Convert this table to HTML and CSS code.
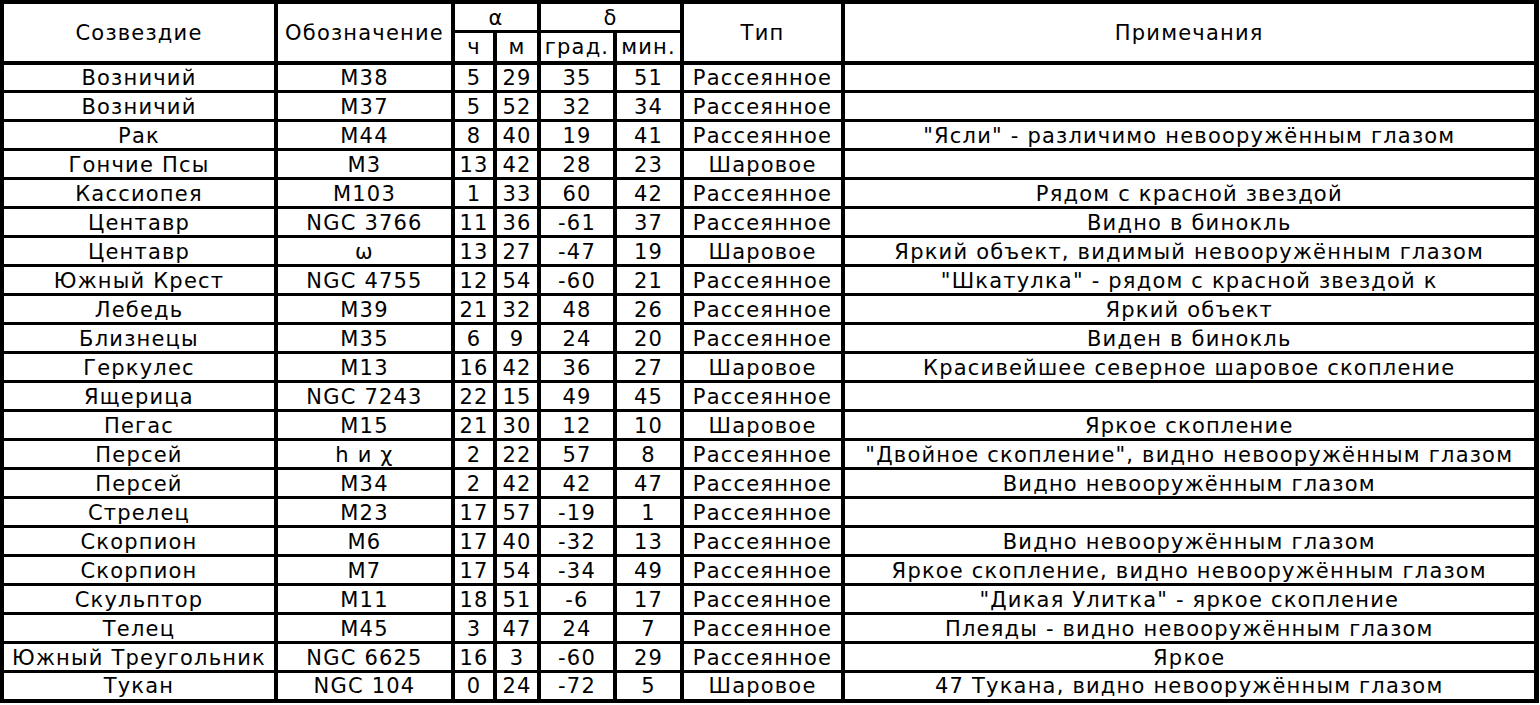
FILE: index.html
```html
<!DOCTYPE html>
<html lang="ru">
<head>
<meta charset="utf-8">
<title>Скопления</title>
<link rel="stylesheet" href="styles.css">
</head>
<body>
<table class="tbl">
  <colgroup>
    <col class="c-const">
    <col class="c-desig">
    <col class="c-h">
    <col class="c-m">
    <col class="c-deg">
    <col class="c-min">
    <col class="c-type">
    <col class="c-note">
  </colgroup>
  <thead>
    <tr class="hrow-a">
      <th rowspan="2">Созвездие</th>
      <th rowspan="2">Обозначение</th>
      <th colspan="2">α</th>
      <th colspan="2">δ</th>
      <th rowspan="2">Тип</th>
      <th rowspan="2">Примечания</th>
    </tr>
    <tr class="hrow-b">
      <th>ч</th>
      <th>м</th>
      <th>град.</th>
      <th>мин.</th>
    </tr>
  </thead>
  <tbody>
    <tr><td>Возничий</td><td>M38</td><td>5</td><td>29</td><td>35</td><td>51</td><td>Рассеянное</td><td></td></tr>
    <tr><td>Возничий</td><td>M37</td><td>5</td><td>52</td><td>32</td><td>34</td><td>Рассеянное</td><td></td></tr>
    <tr><td>Рак</td><td>M44</td><td>8</td><td>40</td><td>19</td><td>41</td><td>Рассеянное</td><td>"Ясли" - различимо невооружённым глазом</td></tr>
    <tr><td>Гончие Псы</td><td>M3</td><td>13</td><td>42</td><td>28</td><td>23</td><td>Шаровое</td><td></td></tr>
    <tr><td>Кассиопея</td><td>M103</td><td>1</td><td>33</td><td>60</td><td>42</td><td>Рассеянное</td><td>Рядом с красной звездой</td></tr>
    <tr><td>Центавр</td><td>NGC 3766</td><td>11</td><td>36</td><td>-61</td><td>37</td><td>Рассеянное</td><td>Видно в бинокль</td></tr>
    <tr><td>Центавр</td><td>ω</td><td>13</td><td>27</td><td>-47</td><td>19</td><td>Шаровое</td><td>Яркий объект, видимый невооружённым глазом</td></tr>
    <tr><td>Южный Крест</td><td>NGC 4755</td><td>12</td><td>54</td><td>-60</td><td>21</td><td>Рассеянное</td><td>"Шкатулка" - рядом с красной звездой к</td></tr>
    <tr><td>Лебедь</td><td>M39</td><td>21</td><td>32</td><td>48</td><td>26</td><td>Рассеянное</td><td>Яркий объект</td></tr>
    <tr><td>Близнецы</td><td>M35</td><td>6</td><td>9</td><td>24</td><td>20</td><td>Рассеянное</td><td>Виден в бинокль</td></tr>
    <tr><td>Геркулес</td><td>M13</td><td>16</td><td>42</td><td>36</td><td>27</td><td>Шаровое</td><td>Красивейшее северное шаровое скопление</td></tr>
    <tr><td>Ящерица</td><td>NGC 7243</td><td>22</td><td>15</td><td>49</td><td>45</td><td>Рассеянное</td><td></td></tr>
    <tr><td>Пегас</td><td>M15</td><td>21</td><td>30</td><td>12</td><td>10</td><td>Шаровое</td><td>Яркое скопление</td></tr>
    <tr><td>Персей</td><td>h и χ</td><td>2</td><td>22</td><td>57</td><td>8</td><td>Рассеянное</td><td>"Двойное скопление", видно невооружённым глазом</td></tr>
    <tr><td>Персей</td><td>M34</td><td>2</td><td>42</td><td>42</td><td>47</td><td>Рассеянное</td><td>Видно невооружённым глазом</td></tr>
    <tr><td>Стрелец</td><td>M23</td><td>17</td><td>57</td><td>-19</td><td>1</td><td>Рассеянное</td><td></td></tr>
    <tr><td>Скорпион</td><td>M6</td><td>17</td><td>40</td><td>-32</td><td>13</td><td>Рассеянное</td><td>Видно невооружённым глазом</td></tr>
    <tr><td>Скорпион</td><td>M7</td><td>17</td><td>54</td><td>-34</td><td>49</td><td>Рассеянное</td><td>Яркое скопление, видно невооружённым глазом</td></tr>
    <tr><td>Скульптор</td><td>M11</td><td>18</td><td>51</td><td>-6</td><td>17</td><td>Рассеянное</td><td>"Дикая Улитка" - яркое скопление</td></tr>
    <tr><td>Телец</td><td>M45</td><td>3</td><td>47</td><td>24</td><td>7</td><td>Рассеянное</td><td>Плеяды - видно невооружённым глазом</td></tr>
    <tr><td>Южный Треугольник</td><td>NGC 6625</td><td>16</td><td>3</td><td>-60</td><td>29</td><td>Рассеянное</td><td>Яркое</td></tr>
    <tr><td>Тукан</td><td>NGC 104</td><td>0</td><td>24</td><td>-72</td><td>5</td><td>Шаровое</td><td>47 Тукана, видно невооружённым глазом</td></tr>
  </tbody>
</table>
</body>
</html>
```

FILE: styles.css
```css
html, body {
  margin: 0;
  padding: 0;
  background: #fff;
}

.tbl {
  border-collapse: collapse;
  table-layout: fixed;
  width: 1538px;
  font-family: "DejaVu Sans", Verdana, sans-serif;
  font-size: 21px;
  letter-spacing: 1.2px;
  color: #000;
  border-top: 4px solid #000;
  border-left: 4px solid #000;
  border-right: 5px solid #000;
  border-bottom: 4px solid #000;
}

.c-const { width: 274px; }
.c-desig { width: 177px; }
.c-h     { width: 42px; }
.c-m     { width: 44px; }
.c-deg   { width: 76px; }
.c-min   { width: 67px; }
.c-type  { width: 161px; }
.c-note  { width: 693px; }

.tbl th,
.tbl td {
  padding: 1px 0 0;
  text-align: center;
  vertical-align: middle;
  white-space: nowrap;
  font-weight: normal;
  line-height: 24px;
  border-left: 4px solid #000;
  border-right: 4px solid #000;
  border-top: 3px solid #000;
  border-bottom: 3px solid #000;
}

.hrow-a { height: 29.5px; }
.hrow-b { height: 31px; }

.tbl thead tr.hrow-b th {
  border-bottom: 4px solid #000;
}

.tbl thead th[rowspan] {
  border-bottom: 4px solid #000;
}

.tbl tbody tr { height: 29px; }
```
